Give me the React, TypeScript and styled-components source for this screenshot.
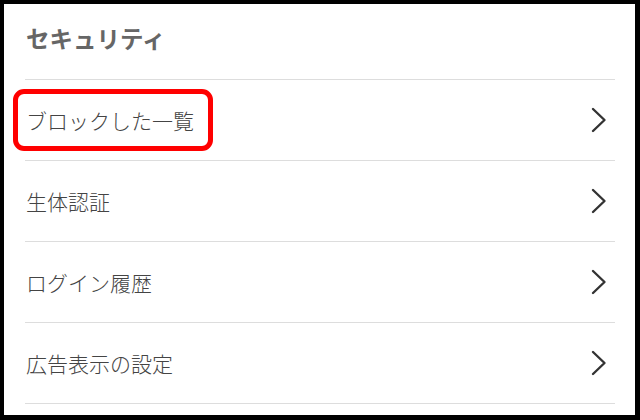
import React from "react";
import styled, { createGlobalStyle } from "styled-components";

const Global = createGlobalStyle`
  html, body {
    margin: 0;
    padding: 0;
    background: #000;
  }
  body {
    font-family: "Noto Sans CJK JP", "Noto Sans", sans-serif;
  }
`;

const Frame = styled.div`
  width: 640px;
  height: 420px;
  box-sizing: border-box;
  padding: 4px 5px 5px 4px;
  background: #000;
`;

const Panel = styled.section`
  height: 100%;
  background: #fff;
  padding: 0 20px 0 21px;
  box-sizing: border-box;
  position: relative;
`;

const Title = styled.h2`
  margin: 0;
  height: 76px;
  display: flex;
  align-items: center;
  padding-left: 1px;
  padding-bottom: 8px;
  box-sizing: border-box;
  font-size: 23.5px;
  font-weight: 700;
  color: #666;
  border-bottom: 1px solid #ddd;
`;

const List = styled.ul`
  list-style: none;
  margin: 0;
  padding: 0;
`;

const Row = styled.li<{ $highlight?: boolean }>`
  position: relative;
  height: 81px;
  box-sizing: border-box;
  border-bottom: 1px solid #ddd;
  display: flex;
  align-items: center;
  justify-content: space-between;
  padding: 0 8px 0 1px;
  font-size: 21px;
  font-weight: 300;
  color: #444;

  ${(p) =>
    p.$highlight &&
    `
    &::before {
      content: "";
      position: absolute;
      left: -12px;
      top: 9px;
      width: 200px;
      height: 62px;
      box-sizing: border-box;
      border: 5px solid #f00;
      border-radius: 11px;
    }
  `}
`;

const Chevron = () => (
  <svg width="16" height="26" viewBox="0 0 16 26" fill="none">
    <path
      d="M2 2 L13.5 13 L2 24"
      stroke="#333"
      strokeWidth="2.4"
      strokeLinecap="round"
      strokeLinejoin="round"
    />
  </svg>
);

const items = [
  { label: "ブロックした一覧", highlight: true },
  { label: "生体認証" },
  { label: "ログイン履歴" },
  { label: "広告表示の設定" },
];

export default function App() {
  return (
    <>
      <Global />
      <Frame>
        <Panel>
          <Title>セキュリティ</Title>
          <List>
            {items.map((item) => (
              <Row key={item.label} $highlight={item.highlight}>
                <span>{item.label}</span>
                <Chevron />
              </Row>
            ))}
          </List>
        </Panel>
      </Frame>
    </>
  );
}
